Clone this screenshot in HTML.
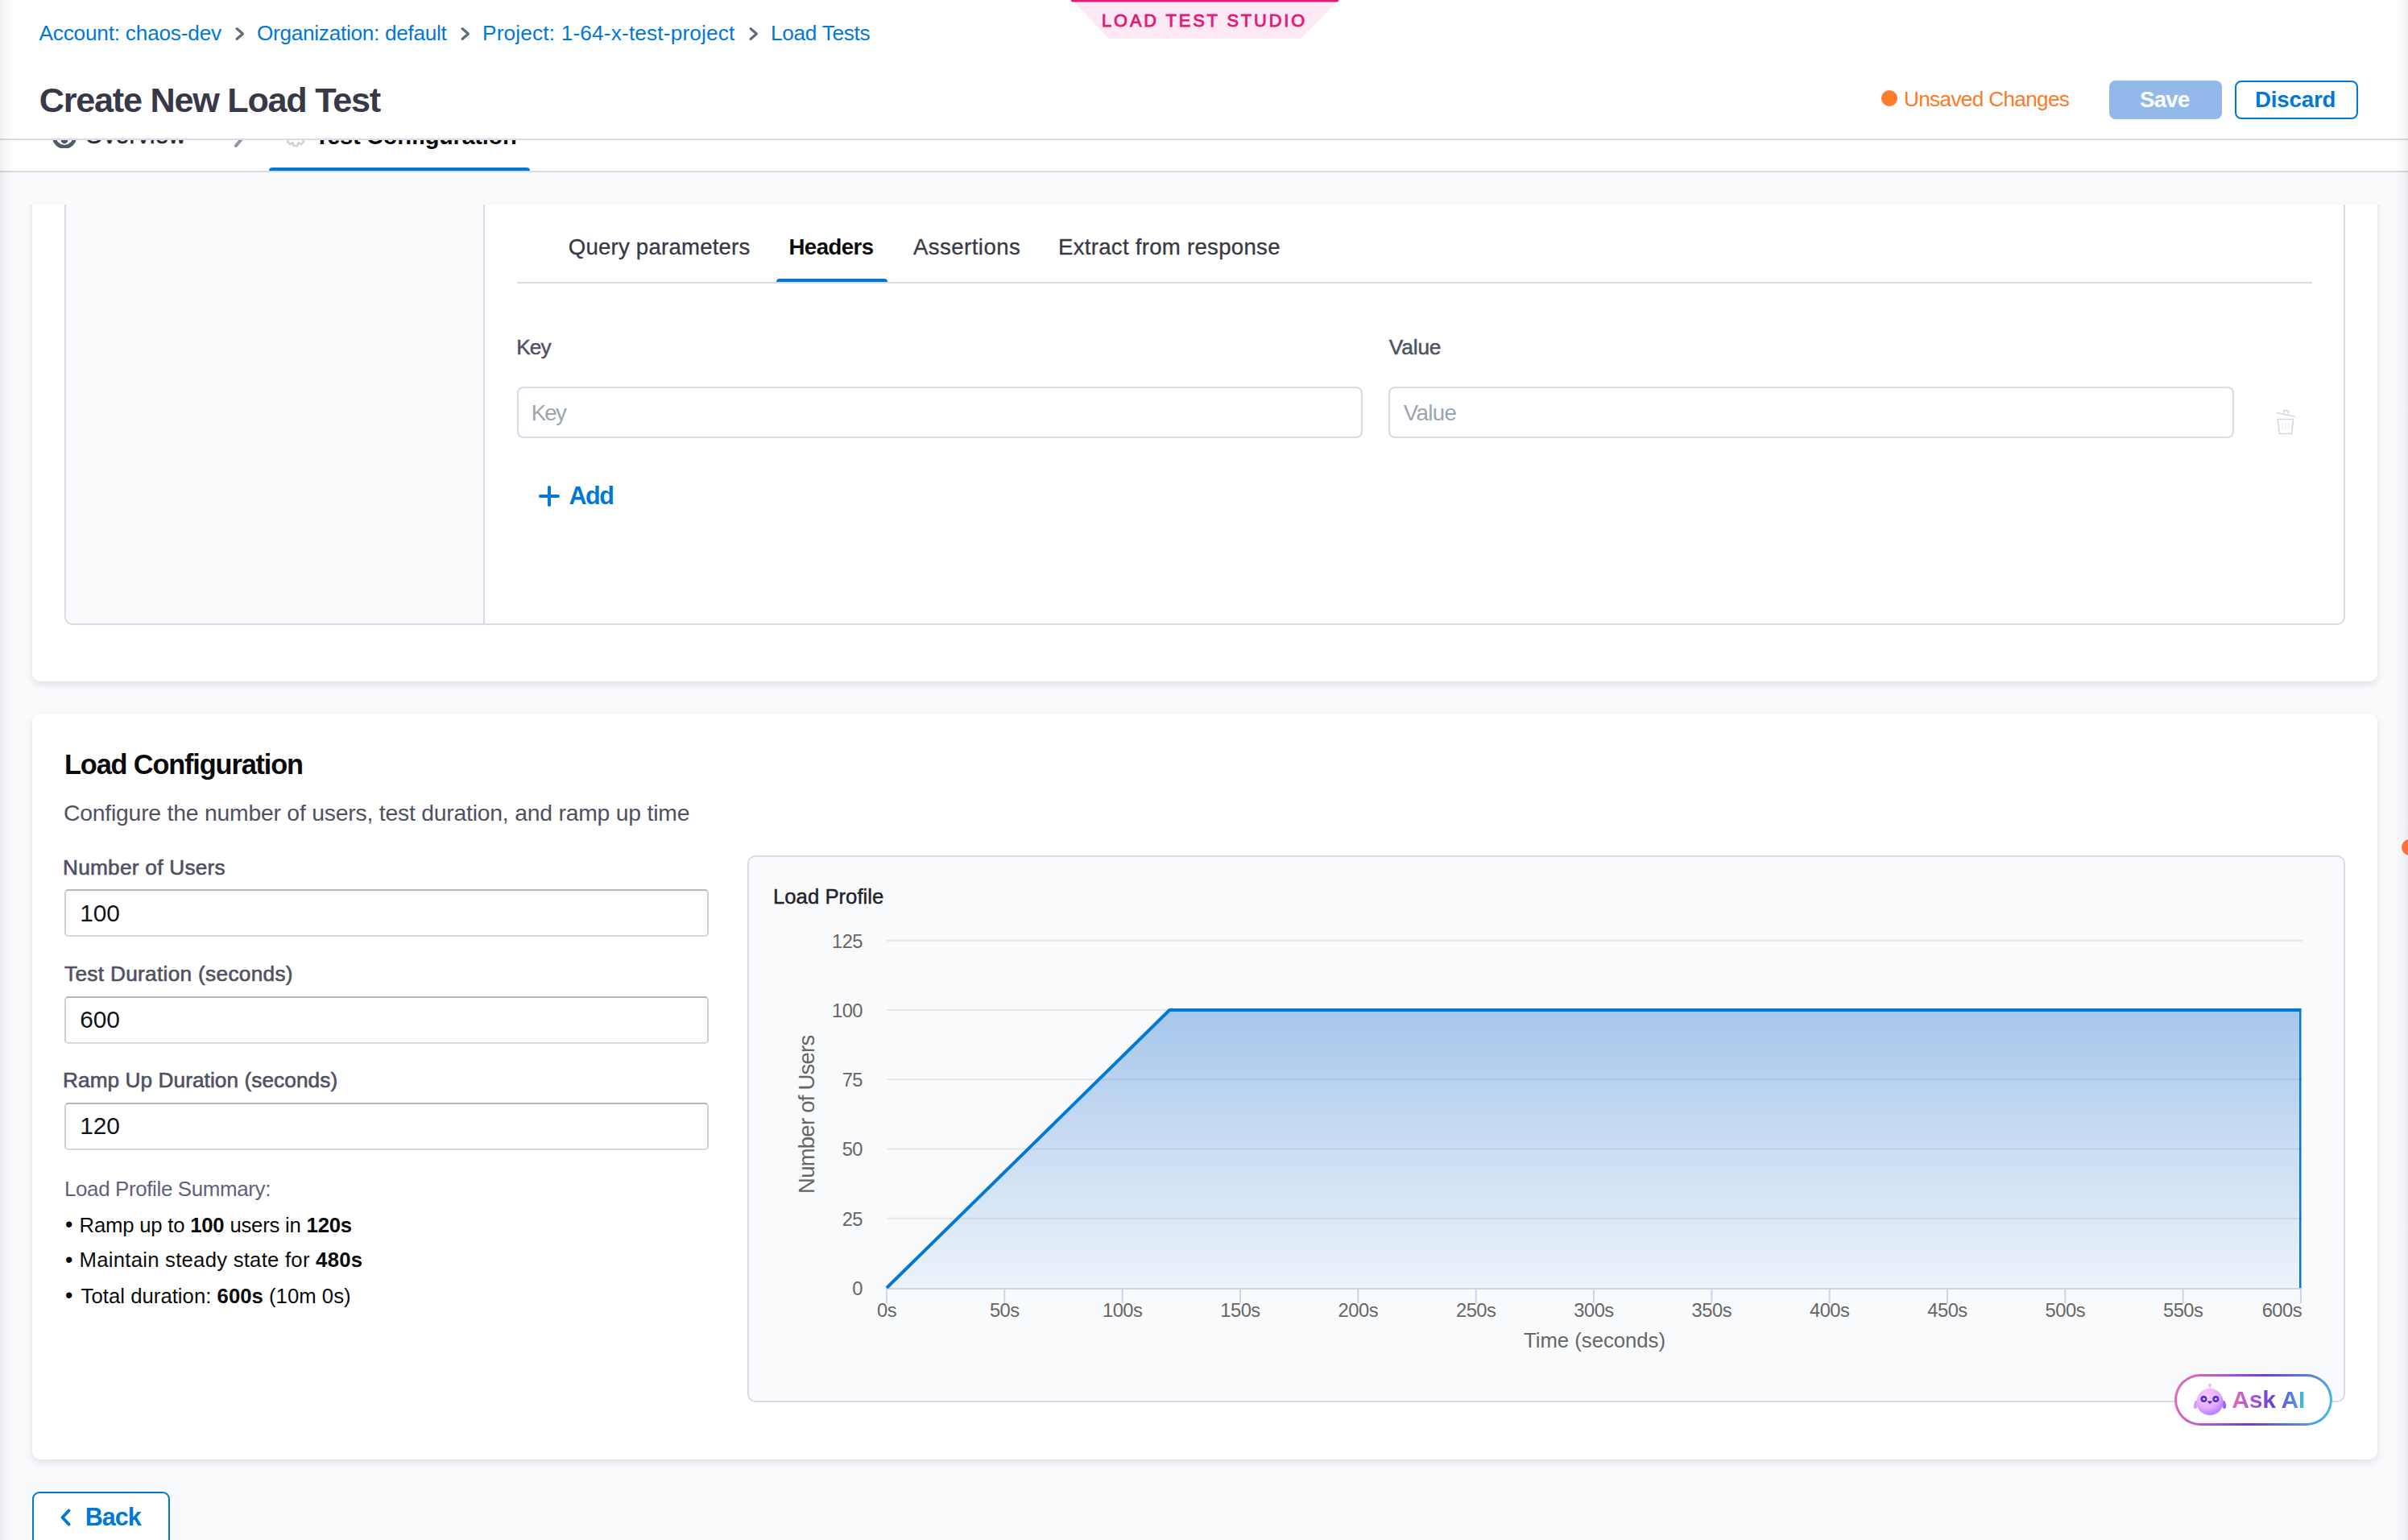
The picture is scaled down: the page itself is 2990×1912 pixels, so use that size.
<!DOCTYPE html>
<html><head><meta charset="utf-8"><title>Create New Load Test</title>
<style>
html,body{margin:0;padding:0;width:2990px;height:1912px;overflow:hidden;background:#f9fafc;}
body{position:relative;font-family:"Liberation Sans",sans-serif;}
.r{position:absolute;}
.t{position:absolute;line-height:1;white-space:pre;font-family:"Liberation Sans",sans-serif;}
b{font-weight:700;}
@media (min-resolution: 1.5dppx) { html{zoom:0.5;} }
</style></head><body>
<div class="r" style="left:0px;top:0px;width:2990px;height:172px;background:#fff;"></div>
<div class="r" style="left:0px;top:172px;width:2990px;height:2px;background:#d9dae5;z-index:5;"></div>
<svg class="r" style="left:1320px;top:0;width:360px;height:52px" viewBox="1320 0 360 52"><polygon points="1333,2 1660,2 1615,48 1377,48" fill="#fde9f3"/><rect x="1330" y="-1" width="332" height="3.4" rx="1.7" fill="#df1b78"/></svg>
<div class="t" style="left:1368.0px;top:14.5px;font-size:21.8px;font-weight:400;color:#df1b78;letter-spacing:2.9px;-webkit-text-stroke:0.9px #df1b78;">LOAD TEST STUDIO</div>
<div class="t" style="left:48.5px;top:27.8px;font-size:26.2px;font-weight:400;color:#0278d5;letter-spacing:-0.2px;">Account: chaos-dev</div>
<div class="t" style="left:319.0px;top:27.8px;font-size:26.2px;font-weight:400;color:#0278d5;letter-spacing:-0.29px;">Organization: default</div>
<div class="t" style="left:599.0px;top:27.8px;font-size:26.2px;font-weight:400;color:#0278d5;letter-spacing:0.18px;">Project: 1-64-x-test-project</div>
<div class="t" style="left:957.0px;top:27.8px;font-size:26.2px;font-weight:400;color:#0278d5;letter-spacing:-0.28px;">Load Tests</div>
<svg class="r" style="left:291px;top:32px;width:16px;height:20px" viewBox="0 0 16 20"><polyline points="3,3.5 10.5,10 3,16.5" fill="none" stroke="#5d6b7a" stroke-width="3" stroke-linecap="round" stroke-linejoin="round"/></svg>
<svg class="r" style="left:571px;top:32px;width:16px;height:20px" viewBox="0 0 16 20"><polyline points="3,3.5 10.5,10 3,16.5" fill="none" stroke="#5d6b7a" stroke-width="3" stroke-linecap="round" stroke-linejoin="round"/></svg>
<svg class="r" style="left:929px;top:32px;width:16px;height:20px" viewBox="0 0 16 20"><polyline points="3,3.5 10.5,10 3,16.5" fill="none" stroke="#5d6b7a" stroke-width="3" stroke-linecap="round" stroke-linejoin="round"/></svg>
<div class="t" style="left:48.7px;top:102.6px;font-size:43.2px;font-weight:700;color:#383946;letter-spacing:-1.24px;">Create New Load Test</div>
<div class="r" style="left:2336px;top:112px;width:20px;height:20px;background:#fd7b2a;border-radius:50%;"></div>
<div class="t" style="left:2364.0px;top:110.1px;font-size:26.2px;font-weight:400;color:#fb7a26;letter-spacing:-0.68px;">Unsaved Changes</div>
<div class="r" style="left:2619px;top:100px;width:140px;height:48px;background:#92b9ea;border-radius:8px;"></div>
<div class="t" style="left:2657.0px;top:109.6px;font-size:27.6px;font-weight:700;color:#fff;letter-spacing:-0.7px;">Save</div>
<div class="r" style="left:2775px;top:100px;width:153px;height:48px;border:2.5px solid #0278d5;border-radius:8px;box-sizing:border-box;background:#fff;"></div>
<div class="t" style="left:2800.0px;top:109.6px;font-size:27.6px;font-weight:700;color:#0278d5;letter-spacing:-0.13px;">Discard</div>
<div class="r" style="left:0;top:174px;width:2990px;height:38px;background:#fff;overflow:hidden;"><svg class="r" style="left:60px;top:-30px;width:40px;height:40px" viewBox="0 0 40 40"><circle cx="20" cy="25.4" r="12.9" fill="none" stroke="#4f5b6a" stroke-width="4.8"/><circle cx="20" cy="30" r="4.4" fill="#4f5b6a"/></svg><div class="t" style="left:105.6px;top:-19.7px;font-size:29.1px;font-weight:400;color:#2b2c36;letter-spacing:0.54px;-webkit-text-stroke:0.6px #22222a;">Overview</div>
<svg class="r" style="left:284px;top:-20px;width:30px;height:32px" viewBox="0 0 30 32"><polyline points="9,4 21,12.5 9,27" fill="none" stroke="#9293ab" stroke-width="4" stroke-linecap="round" stroke-linejoin="round"/></svg><svg class="r" style="left:350px;top:-30px;width:34px;height:40px" viewBox="0 0 34 40"><path d="M25.75,21.85 L28.98,22.70 L28.98,27.30 L25.75,28.15 L25.41,28.96 L27.10,31.84 L23.84,35.10 L20.96,33.41 L20.15,33.75 L19.30,36.98 L14.70,36.98 L13.85,33.75 L13.04,33.41 L10.16,35.10 L6.90,31.84 L8.59,28.96 L8.25,28.15 L5.02,27.30 L5.02,22.70 L8.25,21.85 L8.59,21.04 L6.90,18.16 L10.16,14.90 L13.04,16.59 L13.85,16.25 L14.70,13.02 L19.30,13.02 L20.15,16.25 L20.96,16.59 L23.84,14.90 L27.10,18.16 L25.41,21.04 Z" fill="none" stroke="#d2d2d6" stroke-width="2.6" stroke-linejoin="round"/></svg><div class="t" style="left:391.0px;top:-19.3px;font-size:29.1px;font-weight:700;color:#0b0b0d;letter-spacing:-0.34px;">Test Configuration</div>
<div class="r" style="left:334px;top:34px;width:324px;height:4px;background:#0278d5;border-radius:4px 4px 0 0;"></div>
</div>
<div class="r" style="left:0px;top:212px;width:2990px;height:2px;background:#d9dae5;"></div>
<div class="r" style="left:0px;top:214px;width:2990px;height:1698px;background:#f9fafc;"></div>
<div class="r" style="left:0;top:254px;width:2990px;height:1658px;overflow:hidden;"><div class="r" style="left:40px;top:-54px;width:2912px;height:646px;background:#fff;border-radius:0 0 10px 10px;box-shadow:0 0 2px rgba(40,41,61,.04),0 4px 8px rgba(96,97,112,.16);"></div>
<div class="r" style="left:80px;top:-54px;width:2832px;height:576px;border:2px solid #d9dae5;border-radius:0 0 10px 10px;box-sizing:border-box;background:#fff;overflow:hidden;"></div>
<div class="r" style="left:82px;top:-14px;width:518px;height:534px;background:#f9fafc;border-radius:0 0 0 8px;"></div>
<div class="r" style="left:600px;top:-14px;width:2px;height:534px;background:#d9dae5;"></div>
<div class="t" style="left:705.8px;top:38.6px;font-size:27.6px;font-weight:400;color:#383946;letter-spacing:0.21px;-webkit-text-stroke:0.3px #383946;">Query parameters</div>
<div class="t" style="left:979.5px;top:38.6px;font-size:27.6px;font-weight:700;color:#0b0b0d;letter-spacing:-0.56px;">Headers</div>
<div class="t" style="left:1134.0px;top:38.6px;font-size:27.6px;font-weight:400;color:#383946;letter-spacing:0.44px;-webkit-text-stroke:0.3px #383946;">Assertions</div>
<div class="t" style="left:1314.0px;top:38.6px;font-size:27.6px;font-weight:400;color:#383946;letter-spacing:0.28px;-webkit-text-stroke:0.3px #383946;">Extract from response</div>
<div class="r" style="left:642px;top:96px;width:2229px;height:2px;background:#d9dae5;"></div>
<div class="r" style="left:964px;top:92px;width:138px;height:4px;background:#0278d5;border-radius:4px 4px 0 0;"></div>
<div class="t" style="left:641.3px;top:163.8px;font-size:26.2px;font-weight:400;color:#4f5162;letter-spacing:-0.9px;-webkit-text-stroke:0.45px #4f5162;">Key</div>
<div class="t" style="left:1724.8px;top:163.5px;font-size:26.2px;font-weight:400;color:#4f5162;letter-spacing:-0.1px;-webkit-text-stroke:0.5px #4f5162;">Value</div>
<div class="r" style="left:642px;top:226px;width:1050px;height:64px;border:2px solid #d9dae5;border-radius:8px;box-sizing:border-box;background:#fff;"></div>
<div class="r" style="left:1724px;top:226px;width:1050px;height:64px;border:2px solid #d9dae5;border-radius:8px;box-sizing:border-box;background:#fff;"></div>
<div class="t" style="left:659.7px;top:244.6px;font-size:27.6px;font-weight:400;color:#9aa5b1;letter-spacing:-1.73px;">Key</div>
<div class="t" style="left:1742.8px;top:244.6px;font-size:27.6px;font-weight:400;color:#9aa5b1;letter-spacing:-0.62px;">Value</div>
<svg class="r" style="left:2820px;top:251px;width:36px;height:36px" viewBox="2820 505 36 36"><g fill="none" stroke="#d6d6e3" stroke-width="1.6" stroke-linejoin="round" stroke-linecap="round"><line x1="2827.5" y1="512.5" x2="2849" y2="517"/><path d="M2835.5,512 l0.8,-2.6 l5.6,1.2 l-0.6,2.6"/><path d="M2828,520.5 L2847.5,520.5 L2845.5,538.5 L2830.5,538.5 Z"/></g><g stroke="#ececf2" stroke-width="1.3"><line x1="2834" y1="525" x2="2834.5" y2="534"/><line x1="2838" y1="525" x2="2838" y2="534"/><line x1="2842" y1="525" x2="2841.5" y2="534"/></g></svg><svg class="r" style="left:668px;top:348px;width:28px;height:28px" viewBox="0 0 28 28"><path d="M14,3 V25 M3,14 H25" stroke="#0278d5" stroke-width="4" stroke-linecap="round"/></svg><div class="t" style="left:706.4px;top:346.2px;font-size:30.5px;font-weight:700;color:#0278d5;letter-spacing:-1.43px;">Add</div>
<div class="r" style="left:40px;top:632px;width:2912px;height:926px;background:#fff;border-radius:10px;box-shadow:0 0 2px rgba(40,41,61,.04),0 4px 8px rgba(96,97,112,.16);"></div>
<div class="t" style="left:80.0px;top:677.8px;font-size:34.3px;font-weight:700;color:#0b0b0d;letter-spacing:-1.13px;">Load Configuration</div>
<div class="t" style="left:79.0px;top:741.3px;font-size:28.3px;font-weight:400;color:#4f5162;letter-spacing:-0.2px;">Configure the number of users, test duration, and ramp up time</div>
<div class="t" style="left:78.0px;top:810.3px;font-size:26.2px;font-weight:400;color:#4f5162;letter-spacing:0.27px;-webkit-text-stroke:0.6px #4f5162;">Number of Users</div>
<div class="r" style="left:80px;top:850px;width:800px;height:59px;border:2px solid #ccced2;border-top-color:#b4b7bb;border-bottom-color:#d8d9db;border-radius:5px;box-sizing:border-box;background:#fff;"></div>
<div class="t" style="left:99.2px;top:864.6px;font-size:29.8px;font-weight:400;color:#0f1419;letter-spacing:-0.07px;">100</div>
<div class="t" style="left:80.0px;top:942.3px;font-size:26.2px;font-weight:400;color:#4f5162;letter-spacing:0.32px;-webkit-text-stroke:0.6px #4f5162;">Test Duration (seconds)</div>
<div class="r" style="left:80px;top:983px;width:800px;height:59px;border:2px solid #ccced2;border-top-color:#b4b7bb;border-bottom-color:#d8d9db;border-radius:5px;box-sizing:border-box;background:#fff;"></div>
<div class="t" style="left:99.2px;top:996.8px;font-size:29.8px;font-weight:400;color:#0f1419;letter-spacing:-0.07px;">600</div>
<div class="t" style="left:78.0px;top:1074.3px;font-size:26.2px;font-weight:400;color:#4f5162;letter-spacing:0.08px;-webkit-text-stroke:0.6px #4f5162;">Ramp Up Duration (seconds)</div>
<div class="r" style="left:80px;top:1115px;width:800px;height:59px;border:2px solid #ccced2;border-top-color:#b4b7bb;border-bottom-color:#d8d9db;border-radius:5px;box-sizing:border-box;background:#fff;"></div>
<div class="t" style="left:99.2px;top:1129.1px;font-size:29.8px;font-weight:400;color:#0f1419;letter-spacing:-0.07px;">120</div>
<div class="t" style="left:80.0px;top:1210.1px;font-size:25.9px;font-weight:400;color:#5f6180;letter-spacing:-0.35px;">Load Profile Summary:</div>
<div class="t" style="left:81.0px;top:1253.2px;font-size:26.9px;font-weight:400;color:#0b0b0d;letter-spacing:0px;">•</div>
<div class="t" style="left:81.0px;top:1296.8px;font-size:26.9px;font-weight:400;color:#0b0b0d;letter-spacing:0px;">•</div>
<div class="t" style="left:81.0px;top:1341.2px;font-size:26.9px;font-weight:400;color:#0b0b0d;letter-spacing:0px;">•</div>
<div class="t" style="left:98.6px;top:1254.7px;font-size:25.7px;font-weight:400;color:#0b0b0d;letter-spacing:-0.21px;">Ramp up to <b>100</b> users in <b>120s</b></div>
<div class="t" style="left:98.6px;top:1298.2px;font-size:25.7px;font-weight:400;color:#0b0b0d;letter-spacing:0.25px;">Maintain steady state for <b>480s</b></div>
<div class="t" style="left:100.6px;top:1342.7px;font-size:25.7px;font-weight:400;color:#0b0b0d;letter-spacing:0.03px;">Total duration: <b>600s</b> (10m 0s)</div>
<div class="r" style="left:928px;top:808px;width:1984px;height:679px;border:2px solid #d9dae5;border-radius:10px;box-sizing:border-box;background:#f9fafc;"></div>
<div class="t" style="left:960.0px;top:846.8px;font-size:25.7px;font-weight:400;color:#22222a;letter-spacing:0.02px;-webkit-text-stroke:0.45px #22222a;">Load Profile</div>
<svg class="r" style="left:930px;top:886px;width:1980px;height:560px" viewBox="930 1140 1980 560"><defs><clipPath id="pc"><rect x="1098.0" y="1100" width="1759.5" height="500.0"/></clipPath></defs><defs><linearGradient id="ag" x1="0" y1="0" x2="0" y2="1"><stop offset="0" stop-color="#2a7ad4" stop-opacity="0.4"/><stop offset="1" stop-color="#2a7ad4" stop-opacity="0.055"/></linearGradient></defs><rect x="1101.0" y="1511.75" width="1758.0" height="2" fill="#e6e6e6"/><rect x="1101.0" y="1425.50" width="1758.0" height="2" fill="#e6e6e6"/><rect x="1101.0" y="1339.25" width="1758.0" height="2" fill="#e6e6e6"/><rect x="1101.0" y="1253.00" width="1758.0" height="2" fill="#e6e6e6"/><rect x="1101.0" y="1166.75" width="1758.0" height="2" fill="#e6e6e6"/><path d="M1101.0,1599.0 L1452.20,1254.00 L2857.0,1254.00 L2857.0,1599.0 Z" fill="url(#ag)"/><rect x="1101.0" y="1599.0" width="1758.0" height="2" fill="#ccd6eb"/><rect x="1100.00" y="1599.0" width="2" height="19" fill="#ccd6eb"/><rect x="1246.33" y="1599.0" width="2" height="19" fill="#ccd6eb"/><rect x="1392.67" y="1599.0" width="2" height="19" fill="#ccd6eb"/><rect x="1539.00" y="1599.0" width="2" height="19" fill="#ccd6eb"/><rect x="1685.33" y="1599.0" width="2" height="19" fill="#ccd6eb"/><rect x="1831.67" y="1599.0" width="2" height="19" fill="#ccd6eb"/><rect x="1978.00" y="1599.0" width="2" height="19" fill="#ccd6eb"/><rect x="2124.33" y="1599.0" width="2" height="19" fill="#ccd6eb"/><rect x="2270.67" y="1599.0" width="2" height="19" fill="#ccd6eb"/><rect x="2417.00" y="1599.0" width="2" height="19" fill="#ccd6eb"/><rect x="2563.33" y="1599.0" width="2" height="19" fill="#ccd6eb"/><rect x="2709.67" y="1599.0" width="2" height="19" fill="#ccd6eb"/><rect x="2856.00" y="1599.0" width="2" height="19" fill="#ccd6eb"/><path d="M1101.0,1599.0 L1452.20,1254.00 L2857.0,1254.00 L2857.0,1599.0" fill="none" stroke="#0278d5" stroke-width="4" stroke-linejoin="round" clip-path="url(#pc)"/></svg>
<div class="t" style="right:1919px;top:1334.7px;font-size:23.7px;color:#666;letter-spacing:-0.5px;text-align:right">0</div>
<div class="t" style="right:1919px;top:1248.5px;font-size:23.7px;color:#666;letter-spacing:-0.5px;text-align:right">25</div>
<div class="t" style="right:1919px;top:1162.2px;font-size:23.7px;color:#666;letter-spacing:-0.5px;text-align:right">50</div>
<div class="t" style="right:1919px;top:1076.0px;font-size:23.7px;color:#666;letter-spacing:-0.5px;text-align:right">75</div>
<div class="t" style="right:1919px;top:989.7px;font-size:23.7px;color:#666;letter-spacing:-0.5px;text-align:right">100</div>
<div class="t" style="right:1919px;top:903.5px;font-size:23.7px;color:#666;letter-spacing:-0.5px;text-align:right">125</div>
<div class="t" style="left:1001.0px;width:200px;text-align:center;top:1361.9px;font-size:23.7px;color:#666;letter-spacing:-0.5px;">0s</div>
<div class="t" style="left:1147.3px;width:200px;text-align:center;top:1361.9px;font-size:23.7px;color:#666;letter-spacing:-0.5px;">50s</div>
<div class="t" style="left:1293.7px;width:200px;text-align:center;top:1361.9px;font-size:23.7px;color:#666;letter-spacing:-0.5px;">100s</div>
<div class="t" style="left:1440.0px;width:200px;text-align:center;top:1361.9px;font-size:23.7px;color:#666;letter-spacing:-0.5px;">150s</div>
<div class="t" style="left:1586.3px;width:200px;text-align:center;top:1361.9px;font-size:23.7px;color:#666;letter-spacing:-0.5px;">200s</div>
<div class="t" style="left:1732.7px;width:200px;text-align:center;top:1361.9px;font-size:23.7px;color:#666;letter-spacing:-0.5px;">250s</div>
<div class="t" style="left:1879.0px;width:200px;text-align:center;top:1361.9px;font-size:23.7px;color:#666;letter-spacing:-0.5px;">300s</div>
<div class="t" style="left:2025.3px;width:200px;text-align:center;top:1361.9px;font-size:23.7px;color:#666;letter-spacing:-0.5px;">350s</div>
<div class="t" style="left:2171.7px;width:200px;text-align:center;top:1361.9px;font-size:23.7px;color:#666;letter-spacing:-0.5px;">400s</div>
<div class="t" style="left:2318.0px;width:200px;text-align:center;top:1361.9px;font-size:23.7px;color:#666;letter-spacing:-0.5px;">450s</div>
<div class="t" style="left:2464.3px;width:200px;text-align:center;top:1361.9px;font-size:23.7px;color:#666;letter-spacing:-0.5px;">500s</div>
<div class="t" style="left:2610.7px;width:200px;text-align:center;top:1361.9px;font-size:23.7px;color:#666;letter-spacing:-0.5px;">550s</div>
<div class="t" style="right:132px;top:1361.9px;font-size:23.7px;color:#666;letter-spacing:-0.5px;">600s</div>
<div class="t" style="left:1830px;width:300px;text-align:center;top:1398.2px;font-size:25.7px;color:#666;">Time (seconds)</div>
<div class="t" style="left:851.5px;width:300px;text-align:center;top:1116.4px;font-size:27.5px;line-height:27.5px;color:#666;letter-spacing:-0.76px;transform:rotate(-90deg);">Number of Users</div>
<div class="r" style="left:2700px;top:1452px;width:196px;height:64px;border-radius:32px;background:linear-gradient(108deg,#e670b2 0%,#b458d0 28%,#6a3fd8 52%,#5a7fdc 78%,#3fc8de 100%);"></div>
<div class="r" style="left:2703px;top:1455px;width:190px;height:58px;border-radius:29px;background:#fff;"></div>
<svg class="r" style="left:2720px;top:1460px;width:50px;height:50px" viewBox="0 0 50 50"><defs><radialGradient id="rb" cx="0.38" cy="0.28" r="0.85"><stop offset="0" stop-color="#fdc9ff"/><stop offset="0.55" stop-color="#e4a9ff"/><stop offset="1" stop-color="#9a68ff"/></radialGradient></defs><circle cx="24" cy="5.6" r="1.9" fill="#eab2ff"/><rect x="23.3" y="6" width="1.4" height="4" fill="#eab2ff"/><ellipse cx="6.6" cy="30" rx="2.6" ry="5" transform="rotate(12 6.6 30)" fill="#d49cff"/><ellipse cx="41.4" cy="30" rx="2.6" ry="5" transform="rotate(-12 41.4 30)" fill="#9466ff"/><circle cx="24" cy="26.5" r="16.6" fill="url(#rb)"/><circle cx="16.4" cy="23" r="4.7" fill="#5a34c4" stroke="#f7dcff" stroke-width="0.9"/><circle cx="16.6" cy="23" r="1.2" fill="#fff"/><circle cx="31.4" cy="23" r="4.7" fill="#5a34c4" stroke="#f7dcff" stroke-width="0.9"/><circle cx="31.4" cy="23" r="1.2" fill="#fff"/><path d="M20.6,25.8 Q24,25.2 27.4,25.8 L24,29.2 Z" fill="#4a2ab0"/></svg><div class="t" style="left:2771.3px;top:1469.0px;font-size:30.1px;font-weight:700;color:#7a4fd8;letter-spacing:-0.3px;background:linear-gradient(90deg,#e070b8 0%,#9a52d8 35%,#6a3fd8 55%,#5b78dc 80%,#45c0e0 100%);-webkit-background-clip:text;background-clip:text;color:transparent;">Ask AI</div>
<div class="r" style="left:40px;top:1598px;width:171px;height:108px;border:2.5px solid #0278d5;border-radius:9px;box-sizing:border-box;background:#fff;"></div>
<svg class="r" style="left:70px;top:1617px;width:24px;height:26px" viewBox="0 0 24 26"><polyline points="15.5,4.5 7.5,13 15.5,21.5" fill="none" stroke="#0278d5" stroke-width="4" stroke-linecap="round" stroke-linejoin="round"/></svg><div class="t" style="left:105.7px;top:1614.2px;font-size:30.5px;font-weight:700;color:#0278d5;letter-spacing:-0.98px;">Back</div>
</div>
<div class="r" style="left:2982px;top:1042px;width:20px;height:20px;background:#ff7043;border-radius:50%;z-index:40;"></div>
<div class="r" style="left:0px;top:0px;width:18px;height:1912px;background:linear-gradient(90deg,rgba(30,40,60,.08),rgba(30,40,60,.03) 6px,rgba(30,40,60,0) 18px);z-index:30;"></div>
<div class="r" style="left:2972px;top:0px;width:18px;height:1912px;background:linear-gradient(270deg,rgba(30,40,60,.08),rgba(30,40,60,.035) 5px,rgba(30,40,60,0) 18px);z-index:30;"></div>

</body></html>
